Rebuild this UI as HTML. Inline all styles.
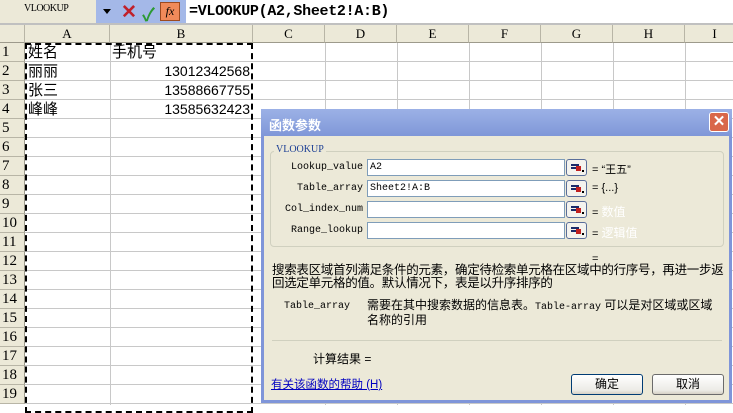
<!DOCTYPE html>
<html><head><meta charset="utf-8"><style>
*{margin:0;padding:0;box-sizing:border-box}
body{width:733px;height:405px;overflow:hidden;background:#fff;position:relative;font-family:"Liberation Sans","Noto Sans CJK SC",sans-serif}
.a{position:absolute}
.fb{left:0;top:0;width:733px;height:25px;background:#fff}
.nb{left:0;top:0;width:96px;height:23px;background:#ece9d8;font-family:"Liberation Serif","Noto Serif CJK SC",serif;font-size:10px;padding:3px 0 0 24px;letter-spacing:-0.5px}
.tb{left:96px;top:0;width:90px;height:23px;background:#a4b8e8}
.ch{top:25px;height:18px;background:#ece9d8;border-right:1px solid #b8b5a6;border-bottom:1px solid #9d9a8c;text-align:center;font-family:"Liberation Serif",serif;font-size:13px;line-height:18px}
.rh{left:0;width:25px;height:19px;background:#ece9d8;border-bottom:1px solid #b8b5a6;border-right:1px solid #9d9a8c;font-family:"Liberation Serif",serif;font-size:15px;line-height:19px;padding-left:2px}
.hl{left:25px;width:708px;height:1px;background:#c8c8c8}
.vl{top:43px;width:1px;height:362px;background:#c8c8c8}
.ct{font-size:15px;line-height:19px;font-family:"Liberation Sans","Noto Sans CJK SC",sans-serif}
.num{font-family:"Liberation Sans",sans-serif;font-size:14px;line-height:19px;text-align:right;width:140px}
.dlg{left:261px;top:109px;width:471px;height:294px;background:#ece9d8;border:3px solid #7f95d9;border-top:none}
.ttl{left:261px;top:109px;width:471px;height:27px;background:linear-gradient(#9cb1e6,#7f97d8);color:#fff;font-size:13px;font-weight:bold;padding:6px 0 0 8px}
.mono{font-family:"Liberation Mono","Noto Sans CJK SC",monospace;font-size:10px}
.lbl{width:105px;text-align:right;font-family:"Liberation Mono",monospace;font-size:10px}
.inp{left:367px;width:198px;height:17px;background:#fff;border:1px solid #7f9db9;font-family:"Liberation Mono",monospace;font-size:10px;padding:2px 2px}
.rb{left:566px;width:21px;height:17px;background:#f4f3ee;border:1px solid #5a6e9a;border-radius:3px}
.rb i{position:absolute;left:4px;top:4px;width:8px;height:2px;background:#1a2a6a;box-shadow:0 3px 0 #1a2a6a}
.rb b{position:absolute;left:9px;top:6px;width:5px;height:5px;background:#c02020}
.rb u{position:absolute;left:15px;top:10px;width:2px;height:2px;background:#000}
.eq{left:592px;font-size:11px}
.btn{width:72px;height:21px;border:1px solid #003c74;border-radius:3px;background:linear-gradient(#fff,#ecebe6 80%,#d6d0c5);font-size:12px;text-align:center;line-height:19px}
</style></head><body>
<div class="a fb"></div>
<div class="a nb">VLOOKUP</div>
<div class="a tb"></div>
<div class="a" style="left:103px;top:9px;border:4px solid transparent;border-top:5px solid #000"></div>
<div class="a" style="left:121px;top:1px;color:#c0202a;font-size:19px;font-weight:bold">✕</div>
<div class="a" style="left:142px;top:1px;color:#2c9a34;font-size:18px;font-weight:bold">✓</div>
<div class="a" style="left:160px;top:2px;width:20px;height:19px;background:#f08a5a;border:1px solid #9c4a20;font-family:'Liberation Serif',serif;font-style:italic;font-size:12px;text-align:center;line-height:17px">fx</div>
<div class="a" style="left:189px;top:3px;font-family:'Liberation Mono',monospace;font-size:15px;font-weight:bold;letter-spacing:-0.3px">=VLOOKUP(A2,Sheet2!A:B)</div>
<div class="a" style="left:0;top:23px;width:733px;height:2px;background:#c0c0c0"></div>

<div class="a ch" style="left:0;width:25px"></div>
<div class="a ch" style="left:25px;width:85px">A</div>
<div class="a ch" style="left:110px;width:143px">B</div>
<div class="a ch" style="left:253px;width:72px">C</div>
<div class="a ch" style="left:325px;width:72px">D</div>
<div class="a ch" style="left:397px;width:72px">E</div>
<div class="a ch" style="left:469px;width:72px">F</div>
<div class="a ch" style="left:541px;width:72px">G</div>
<div class="a ch" style="left:613px;width:72px">H</div>
<div class="a ch" style="left:685px;width:60px">I</div>

<div class="a rh" style="top:43px">1</div><div class="a rh" style="top:62px">2</div><div class="a rh" style="top:81px">3</div><div class="a rh" style="top:100px">4</div><div class="a rh" style="top:119px">5</div><div class="a rh" style="top:138px">6</div><div class="a rh" style="top:157px">7</div><div class="a rh" style="top:176px">8</div><div class="a rh" style="top:195px">9</div><div class="a rh" style="top:214px">10</div><div class="a rh" style="top:233px">11</div><div class="a rh" style="top:252px">12</div><div class="a rh" style="top:271px">13</div><div class="a rh" style="top:290px">14</div><div class="a rh" style="top:309px">15</div><div class="a rh" style="top:328px">16</div><div class="a rh" style="top:347px">17</div><div class="a rh" style="top:366px">18</div><div class="a rh" style="top:385px">19</div>

<div class="a hl" style="top:61px"></div><div class="a hl" style="top:80px"></div><div class="a hl" style="top:99px"></div><div class="a hl" style="top:118px"></div><div class="a hl" style="top:137px"></div><div class="a hl" style="top:156px"></div><div class="a hl" style="top:175px"></div><div class="a hl" style="top:194px"></div><div class="a hl" style="top:213px"></div><div class="a hl" style="top:232px"></div><div class="a hl" style="top:251px"></div><div class="a hl" style="top:270px"></div><div class="a hl" style="top:289px"></div><div class="a hl" style="top:308px"></div><div class="a hl" style="top:327px"></div><div class="a hl" style="top:346px"></div><div class="a hl" style="top:365px"></div><div class="a hl" style="top:384px"></div><div class="a hl" style="top:403px"></div>
<div class="a vl" style="left:110px"></div><div class="a vl" style="left:325px"></div><div class="a vl" style="left:397px"></div><div class="a vl" style="left:469px"></div><div class="a vl" style="left:541px"></div><div class="a vl" style="left:613px"></div><div class="a vl" style="left:685px"></div>
<div class="a" style="left:25px;top:43px;width:228px;height:370px;border:2px dashed #000"></div>

<div class="a ct" style="left:28px;top:43px">姓名</div>
<div class="a ct" style="left:112px;top:43px">手机号</div>
<div class="a ct" style="left:28px;top:62px">丽丽</div>
<div class="a ct" style="left:28px;top:81px">张三</div>
<div class="a ct" style="left:28px;top:100px">峰峰</div>
<div class="a num" style="left:110px;top:62px">13012342568</div>
<div class="a num" style="left:110px;top:81px">13588667755</div>
<div class="a num" style="left:110px;top:100px">13585632423</div>

<div class="a dlg"></div>
<div class="a ttl">函数参数</div>
<div class="a" style="left:709px;top:112px;width:20px;height:20px;background:#d9674a;border:1px solid #fff;border-radius:3px;color:#fff;font-weight:bold;font-size:15px;text-align:center;line-height:18px">✕</div>
<div class="a" style="left:270px;top:151px;width:454px;height:96px;border:1px solid #d0d0bf;border-radius:4px"></div>
<div class="a" style="left:274px;top:144px;background:#ece9d8;padding:0 2px;font-family:'Liberation Serif',serif;font-size:10px;color:#1c3f94">VLOOKUP</div>

<div class="a lbl" style="left:258px;top:162px">Lookup_value</div>
<div class="a lbl" style="left:258px;top:183px">Table_array</div>
<div class="a lbl" style="left:258px;top:204px">Col_index_num</div>
<div class="a lbl" style="left:258px;top:225px">Range_lookup</div>
<div class="a inp" style="top:159px">A2</div>
<div class="a inp" style="top:180px">Sheet2!A:B</div>
<div class="a inp" style="top:201px"></div>
<div class="a inp" style="top:222px"></div>
<div class="a rb" style="top:159px"><i></i><b></b><u></u></div><div class="a rb" style="top:180px"><i></i><b></b><u></u></div><div class="a rb" style="top:201px"><i></i><b></b><u></u></div><div class="a rb" style="top:222px"><i></i><b></b><u></u></div>
<div class="a eq" style="top:161px">= “王五”</div>
<div class="a eq" style="top:182px">= {...}</div>
<div class="a eq" style="top:203px">= <span style="color:#fff;font-size:12px">数值</span></div>
<div class="a eq" style="top:224px">= <span style="color:#fff;font-size:12px">逻辑值</span></div>

<div class="a" style="left:592px;top:253px;font-size:11px">=</div>
<div class="a" style="left:272px;top:264px;font-size:12.5px;line-height:13px;width:458px;letter-spacing:-0.3px">搜索表区域首列满足条件的元素，确定待检索单元格在区域中的行序号，再进一步返回选定单元格的值。默认情况下，表是以升序排序的</div>
<div class="a mono" style="left:284px;top:301px">Table_array</div>
<div class="a" style="left:367px;top:299px;font-size:12px;line-height:13px;width:352px">需要在其中搜索数据的信息表。<span class="mono">Table-array</span> 可以是对区域或区域名称的引用</div>
<div class="a" style="left:272px;top:340px;width:450px;height:1px;background:#d0d0bf"></div>
<div class="a" style="left:313px;top:350px;font-size:12px">计算结果 =</div>
<div class="a" style="left:271px;top:376px;font-size:11.5px;color:#0000c0;text-decoration:underline">有关该函数的帮助 (H)</div>
<div class="a btn" style="left:571px;top:374px">确定</div>
<div class="a btn" style="left:652px;top:374px;border-color:#6b6b6b">取消</div>
</body></html>
